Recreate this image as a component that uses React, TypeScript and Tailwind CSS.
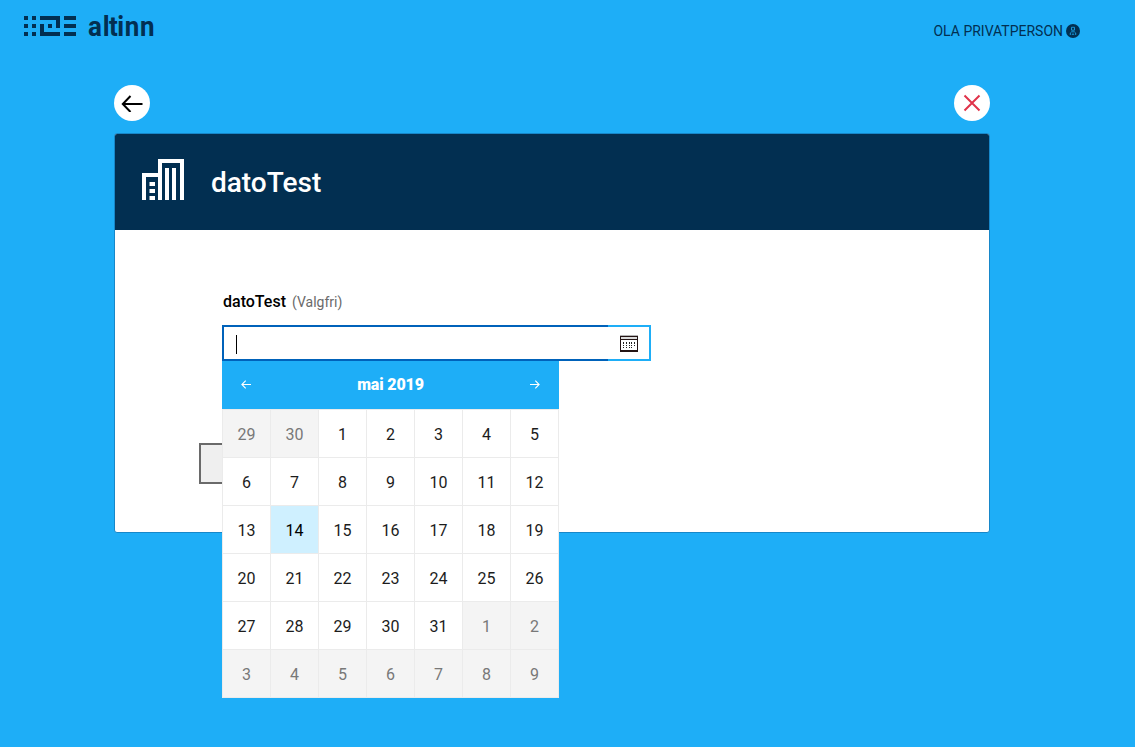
import React from "react";

const days = [29, 30, ...Array.from({ length: 31 }, (_, i) => i + 1), ...Array.from({ length: 9 }, (_, i) => i + 1)];

function AltinnMark() {
  return (
    <svg width="52" height="20" viewBox="0 0 52 20" fill="#022f51" shapeRendering="crispEdges">
      {[0, 8, 16].map((y) => (
        <g key={y}>
          <rect x="0" y={y} width="4" height="4" />
          <rect x="8" y={y} width="4" height="4" />
          <rect x="40" y={y} width="12" height="4" />
        </g>
      ))}
      <path d="M16 0h20v12h-4V4H16z" />
      <path d="M16 8h4v8h16v4H16z" />
      <rect x="24" y="8" width="4" height="4" />
    </svg>
  );
}

function UserIcon() {
  return (
    <svg width="14" height="14" viewBox="0 0 14 14">
      <circle cx="7" cy="7" r="7" fill="#022f51" />
      <path d="M5.500 3.300h3v2.900h-3zM4.300 11V9L5.600 7.800h2.800L9.700 9v2M6.300 10.800V10h1.400v.8" fill="none" stroke="#1eaef7" strokeWidth="0.8" />
    </svg>
  );
}

function BuildingIcon() {
  return (
    <svg width="42" height="41" viewBox="0 0 42 41" fill="#fff">
      <path d="M0 41V14h16V0h26v41h-4V4H20v37h-4V18H4v23z" />
      <path d="M23 9h4v32h-4zM30 9h4v32h-4zM7.500 23h5.500v4H7.500zM7.500 30h5.500v4H7.500zM7.500 37h5.500v4H7.500z" />
    </svg>
  );
}

function CalendarIcon() {
  return (
    <svg width="18" height="17" viewBox="0 0 18 17" shapeRendering="crispEdges">
      <path d="M0 0h18v1H0z" fill="#b5b5b5" />
      <path d="M0 1h18v16H0z" fill="#241414" />
      <path d="M1 2h16v2H1z" fill="#ddd" />
      <path d="M1 5h16v10H1z" fill="#fff" />
      {[7, 10, 12].map((y, r) =>
        [3, 6, 9, 11, 14].map((x, c) =>
          r === 2 && c > 3 ? null : <rect key={`${x}-${y}`} x={x} y={y} width="1" height={r === 0 ? 2 : 1} fill="#222" />,
        ),
      )}
    </svg>
  );
}

function SmallArrow({ flip }: { flip?: boolean }) {
  return (
    <svg width="10" height="9" viewBox="0 0 10 9" fill="none" stroke="#fff" strokeWidth="1.1" className={flip ? "-scale-x-100" : ""}>
      <path d="M10 4.500H.8M4.700.7.900 4.500l3.800 3.800" />
    </svg>
  );
}

function DatePicker() {
  return (
    <div className="absolute top-9 left-0 w-[337px]">
      <div className="flex h-12 items-center justify-between bg-[#1eaef7] px-[19px] text-white">
        <button aria-label="Forrige måned" className="-mt-px"><SmallArrow /></button>
        <span className="text-base leading-6 font-black tracking-[-0.15px]">mai 2019</span>
        <button aria-label="Neste måned" className="-mt-px"><SmallArrow flip /></button>
      </div>
      <div className="grid grid-cols-[repeat(7,48px)] border-t border-l border-[#ebebeb] bg-white">
        {days.map((d, i) => {
          const outside = i < 2 || i > 32;
          const tone = outside ? "bg-[#f4f4f4] text-[#787878]" : i === 15 ? "bg-[#cff0ff] text-black" : "text-[#1c1c1c]";
          return (
            <div key={i} className={`flex h-12 items-center justify-center border-r border-b border-[#ebebeb] pt-[3px] text-base ${tone}`}>
              {d}
            </div>
          );
        })}
      </div>
    </div>
  );
}

export default function App() {
  return (
    <div className="h-[747px] w-full overflow-hidden bg-[#1eaef7] font-[Roboto,sans-serif]">
      <header className="flex h-[85px] items-start justify-between pr-[55px] pl-6">
        <div className="flex pt-4 text-[#022f51]">
          <AltinnMark />
          <svg width="72" height="28" className="-mt-2 ml-3 overflow-visible" fill="#022f51">
            <text x="0 15.300 21.800 30.500 38.200 54.200" y="28" transform="scale(.96 1)" fontFamily="Roboto, sans-serif" fontWeight="700" fontSize="27">altinn</text>
          </svg>
        </div>
        <div className="flex items-center gap-[3px] pt-[21px] text-[14px] leading-5 text-[#022f51]">
          <span>OLA PRIVATPERSON</span>
          <UserIcon />
        </div>
      </header>
      <div className="ml-[114px] w-[876px]">
        <div className="flex h-12 justify-between">
          <button aria-label="Tilbake" className="flex size-9 items-center justify-center rounded-full bg-white">
            <svg width="22" height="18" viewBox="0 0 22 18" fill="none" stroke="#000" strokeWidth="2">
              <path d="M21.500 10H2M9.500 2 1.800 10l7.700 8" />
            </svg>
          </button>
          <button aria-label="Lukk" className="flex size-9 items-center justify-center rounded-full bg-white">
            <svg width="18" height="18" viewBox="0 0 18 18" stroke="#e0334a" strokeWidth="2">
              <path d="m1.500 1.500 15 15M16.500 1.500l-15 15" />
            </svg>
          </button>
        </div>
        <main className="h-[400px] rounded-[3px] border border-[#1787c9] bg-white">
          <div className="flex h-24 items-center rounded-t-[2px] bg-[#022f51] pl-[27px] text-white">
            <div className="-mt-1.5"><BuildingIcon /></div>
            <h1 className="ml-[27px] pt-0.5 text-[28px] leading-9 font-medium">datoTest</h1>
          </div>
          <div className="relative pt-[60px] pl-[107px]">
            <label className="ml-px flex items-baseline gap-1.5 text-base leading-6 font-medium text-black">
              datoTest <span className="text-sm font-normal text-[#6a6a6a]">(Valgfri)</span>
            </label>
            <div className="relative mt-[11px] flex h-9 w-[429px]">
              <div className="flex w-[386px] items-center border-2 border-r-0 border-[#0062ba] pl-3">
                <span className="mt-0.5 h-[19px] w-px bg-black" />
              </div>
              <div className="flex w-[43px] items-center border-2 border-l-0 border-[#1eaef7] pl-3">
                <CalendarIcon />
              </div>
              <div className="z-10"><DatePicker /></div>
            </div>
            <div className="mt-[82px] -ml-[23px] h-[41px] w-28 border-2 border-[#6a6a6a] bg-[#efefef]" />
          </div>
        </main>
      </div>
    </div>
  );
}
